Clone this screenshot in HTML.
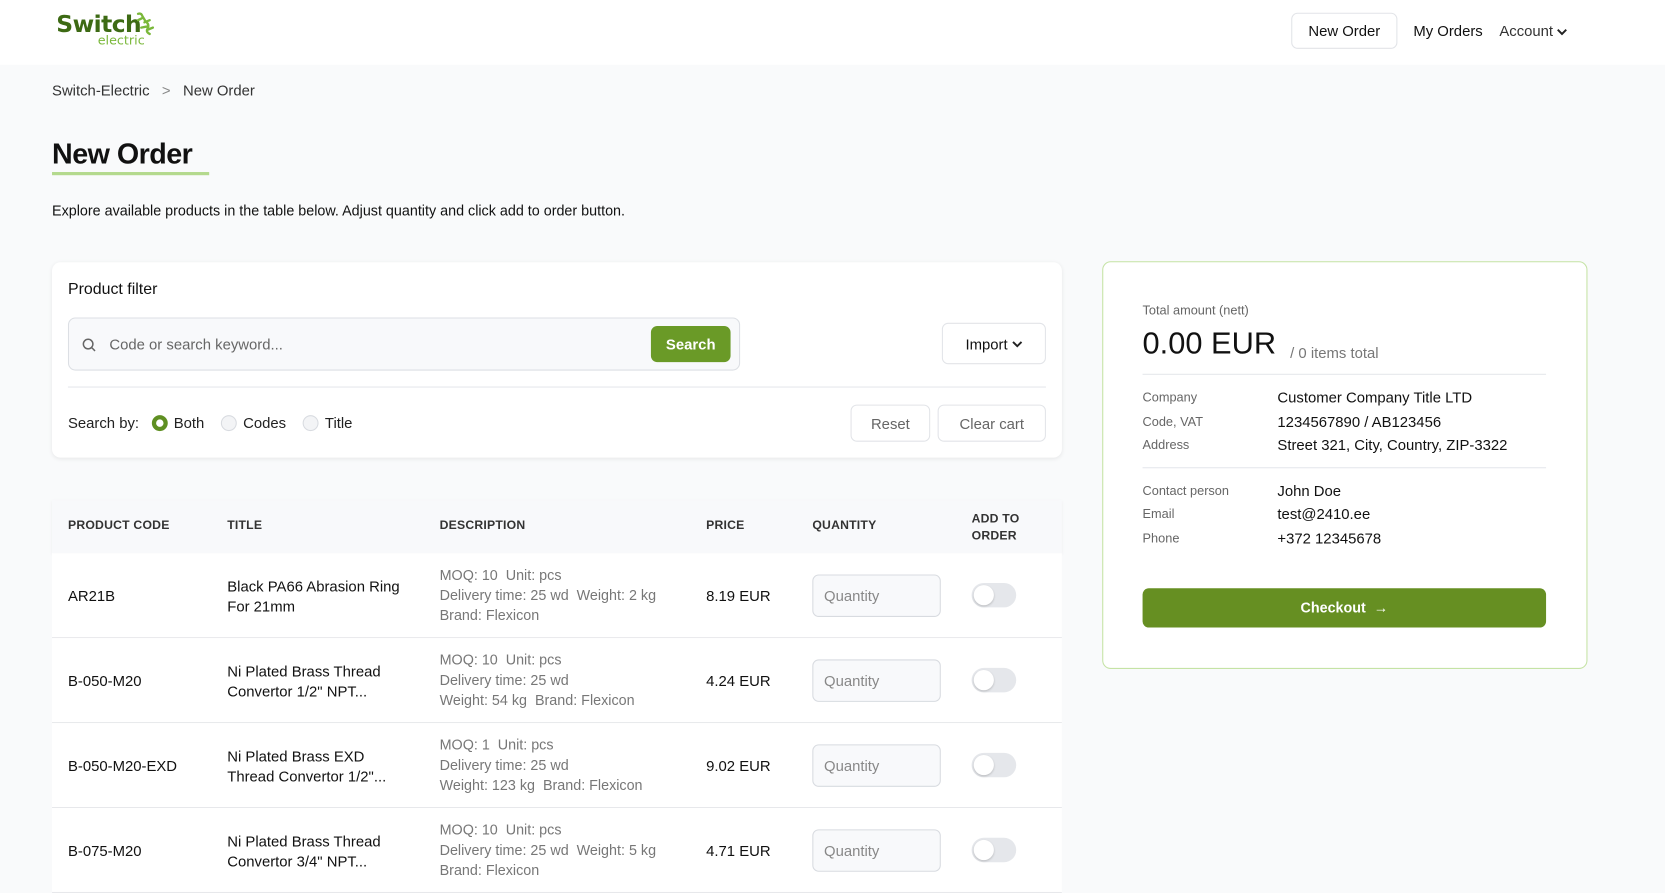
<!DOCTYPE html>
<html><head><meta charset="utf-8"><style>
*{box-sizing:border-box;margin:0;padding:0}
body{width:1665px;height:857px;overflow:hidden;background:#f9fafb;font-family:"Liberation Sans",sans-serif;color:#111;font-size:14px;position:relative}
#w{position:absolute;left:0;top:0;width:1568px;height:807px;transform:scale(1.06186);transform-origin:0 0}
.abs{position:absolute}
header{position:absolute;left:0;top:0;width:1568px;height:61px;background:#fff}
.btn{position:absolute;border:1px solid #e2e4e8;border-radius:6px;background:#fff;display:flex;align-items:center;justify-content:center;font-size:14px}
.card{position:absolute;background:#fff;border-radius:8px;box-shadow:0 1px 4px rgba(0,0,0,.08)}
.radio{display:inline-block;width:15px;height:15px;border-radius:50%;border:1px solid #d8dbe0;background:#f3f4f6;vertical-align:-3px;margin-right:6px}
.th{position:absolute;font-size:11.5px;font-weight:bold;color:#333;letter-spacing:.2px}
.row{position:absolute;left:49px;width:951px;height:80px;background:#fff;border-bottom:1px solid #e7e8eb}
.row div{position:absolute}
.desc{color:#777;font-size:13.5px;line-height:19px}
.qty{width:121px;height:40px;border:1px solid #d8dbe0;border-radius:6px;background:#f8f9fb;color:#888;padding:11px 10px;font-size:14px}
.tog{width:42px;height:23px;border-radius:12px;background:#e5e7eb}
.tog:after{content:"";position:absolute;left:2px;top:2px;width:19px;height:19px;border-radius:50%;background:#fff;box-shadow:0 1px 2px rgba(0,0,0,.2)}
.lbl{position:absolute;left:1076px;font-size:12px;color:#666}
.val{position:absolute;left:1203px;font-size:14px;color:#111}
</style></head><body><div id="w">
<header>
<div class="abs" style="left:53px;top:11px;font-family:'DejaVu Sans',sans-serif;font-size:22px;font-weight:bold;color:#3d6a14;letter-spacing:-0.5px">Switch</div>
<div class="abs" style="left:92px;top:31px;font-family:'DejaVu Sans',sans-serif;font-size:12px;color:#7ab83a">electric</div>
<svg class="abs" style="left:127px;top:10px" width="20" height="24" viewBox="0 0 20 24"><path d="M3 3 Q6 2 7 5 L10 10 Q14 13 12 17 Q10 20 14 22 M7 7 L3 9 M9 11 L14 9 M11 15 L6 16 M12 18 L17 16" stroke="#7ab83a" stroke-width="2.2" fill="none" stroke-linecap="round"/></svg>
<div class="btn" style="left:1216px;top:12px;width:100px;height:34px">New Order</div>
<div class="abs" style="left:1331px;top:21px">My Orders</div>
<div class="abs" style="left:1412px;top:21px;color:#333">Account <svg width="10" height="8" viewBox="0 0 10 8"><path d="M1 2l4 4 4-4" stroke="#222" stroke-width="1.8" fill="none"/></svg></div>
</header>
<div class="abs" style="left:49px;top:77px;color:#333">Switch-Electric &nbsp;&nbsp;<span style="color:#888">&gt;</span>&nbsp;&nbsp; New Order</div>
<div class="abs" style="left:49px;top:130px;font-size:27px;font-weight:bold;letter-spacing:-0.5px">New Order</div>
<div class="abs" style="left:49px;top:162px;width:148px;height:3px;background:#b4d98d"></div>
<div class="abs" style="left:49px;top:191px;font-size:13.5px">Explore available products in the table below. Adjust quantity and click add to order button.</div>

<div class="card" style="left:49px;top:247px;width:951px;height:184px">
<div class="abs" style="left:15px;top:17px;font-size:15px">Product filter</div>
<div class="abs" style="left:15px;top:52px;width:633px;height:50px;border:1px solid #dcdfe4;border-radius:7px;background:#f8f9fb">
<svg class="abs" style="left:12px;top:18px" width="14" height="14" viewBox="0 0 14 14"><circle cx="6" cy="6" r="4.5" stroke="#666" stroke-width="1.4" fill="none"/><path d="M9.5 9.5l3 3" stroke="#666" stroke-width="1.4"/></svg>
<div class="abs" style="left:38px;top:16px;color:#666">Code or search keyword...</div>
<div class="abs" style="left:548px;top:7px;width:75px;height:34px;background:#6a9a27;border-radius:6px;color:#fff;font-weight:bold;text-align:center;line-height:34px;font-size:14px">Search</div>
</div>
<div class="btn" style="left:838px;top:57px;width:98px;height:39px">Import&nbsp;<svg width="10" height="8" viewBox="0 0 10 8"><path d="M1 2l4 4 4-4" stroke="#222" stroke-width="1.8" fill="none"/></svg></div>
<div class="abs" style="left:15px;top:117px;width:921px;height:1px;background:#e5e7eb"></div>
<div class="abs" style="left:15px;top:143px;color:#222">Search by: &nbsp;&nbsp;<span class="radio" style="border:4px solid #5f8f22;background:#fff"></span>Both &nbsp;&nbsp;&nbsp;<span class="radio"></span>Codes &nbsp;&nbsp;&nbsp;<span class="radio"></span>Title</div>
<div class="btn" style="left:752px;top:134px;width:75px;height:35px;color:#666">Reset</div>
<div class="btn" style="left:834px;top:134px;width:102px;height:35px;color:#666">Clear cart</div>
</div>

<div class="abs" style="left:49px;top:471px;width:951px;height:50px;background:#f8f9fb;box-shadow:0 1px 3px rgba(0,0,0,.05)"></div>
<div class="th" style="left:64px;top:489px">PRODUCT CODE</div>
<div class="th" style="left:214px;top:489px">TITLE</div>
<div class="th" style="left:414px;top:489px">DESCRIPTION</div>
<div class="th" style="left:665px;top:489px">PRICE</div>
<div class="th" style="left:765px;top:489px">QUANTITY</div>
<div class="th" style="left:915px;top:481px;line-height:16px">ADD TO<br>ORDER</div>

<div class="row" style="top:521px"><div style="left:15px;top:32px">AR21B</div><div style="left:165px;top:22px;line-height:19px;width:165px">Black PA66 Abrasion Ring For 21mm</div><div class="desc" style="left:365px;top:11px">MOQ: 10&nbsp; Unit: pcs<br>Delivery time: 25 wd&nbsp; Weight: 2 kg<br>Brand: Flexicon</div><div style="left:616px;top:32px">8.19 EUR</div><div class="qty" style="left:716px;top:20px">Quantity</div><div class="tog" style="left:866px;top:28px"></div></div>
<div class="row" style="top:601px"><div style="left:15px;top:32px">B-050-M20</div><div style="left:165px;top:22px;line-height:19px;width:165px">Ni Plated Brass Thread Convertor 1/2" NPT...</div><div class="desc" style="left:365px;top:11px">MOQ: 10&nbsp; Unit: pcs<br>Delivery time: 25 wd<br>Weight: 54 kg&nbsp; Brand: Flexicon</div><div style="left:616px;top:32px">4.24 EUR</div><div class="qty" style="left:716px;top:20px">Quantity</div><div class="tog" style="left:866px;top:28px"></div></div>
<div class="row" style="top:681px"><div style="left:15px;top:22px">&nbsp;</div><div style="left:15px;top:32px">B-050-M20-EXD</div><div style="left:165px;top:22px;line-height:19px;width:165px">Ni Plated Brass EXD<br>Thread Convertor 1/2"...</div><div class="desc" style="left:365px;top:11px">MOQ: 1&nbsp; Unit: pcs<br>Delivery time: 25 wd<br>Weight: 123 kg&nbsp; Brand: Flexicon</div><div style="left:616px;top:32px">9.02 EUR</div><div class="qty" style="left:716px;top:20px">Quantity</div><div class="tog" style="left:866px;top:28px"></div></div>
<div class="row" style="top:761px"><div style="left:15px;top:32px">B-075-M20</div><div style="left:165px;top:22px;line-height:19px;width:165px">Ni Plated Brass Thread Convertor 3/4" NPT...</div><div class="desc" style="left:365px;top:11px">MOQ: 10&nbsp; Unit: pcs<br>Delivery time: 25 wd&nbsp; Weight: 5 kg<br>Brand: Flexicon</div><div style="left:616px;top:32px">4.71 EUR</div><div class="qty" style="left:716px;top:20px">Quantity</div><div class="tog" style="left:866px;top:28px"></div></div>

<div class="abs" style="left:1038px;top:246px;width:457px;height:384px;background:#fff;border:1px solid #c5e3a5;border-radius:8px"></div>
<div class="lbl" style="top:285px">Total amount (nett)</div>
<div class="abs" style="left:1076px;top:308px;font-size:29px">0.00 EUR</div>
<div class="abs" style="left:1215px;top:324px;color:#777;font-size:14px">/ 0 items total</div>
<div class="abs" style="left:1076px;top:352px;width:380px;height:1px;background:#e5e7eb"></div>
<div class="lbl" style="top:367px">Company</div><div class="val" style="top:366px">Customer Company Title LTD</div>
<div class="lbl" style="top:390px">Code, VAT</div><div class="val" style="top:389px">1234567890 / AB123456</div>
<div class="lbl" style="top:412px">Address</div><div class="val" style="top:411px">Street 321, City, Country, ZIP-3322</div>
<div class="abs" style="left:1076px;top:440px;width:380px;height:1px;background:#e5e7eb"></div>
<div class="lbl" style="top:455px">Contact person</div><div class="val" style="top:454px">John Doe</div>
<div class="lbl" style="top:477px">Email</div><div class="val" style="top:476px">test@2410.ee</div>
<div class="lbl" style="top:500px">Phone</div><div class="val" style="top:499px">+372 12345678</div>
<div class="abs" style="left:1076px;top:554px;width:380px;height:37px;background:#668f22;border-radius:6px;color:#fff;font-weight:bold;text-align:center;line-height:37px;font-size:13.5px">Checkout &nbsp;→</div>
</div></body></html>
